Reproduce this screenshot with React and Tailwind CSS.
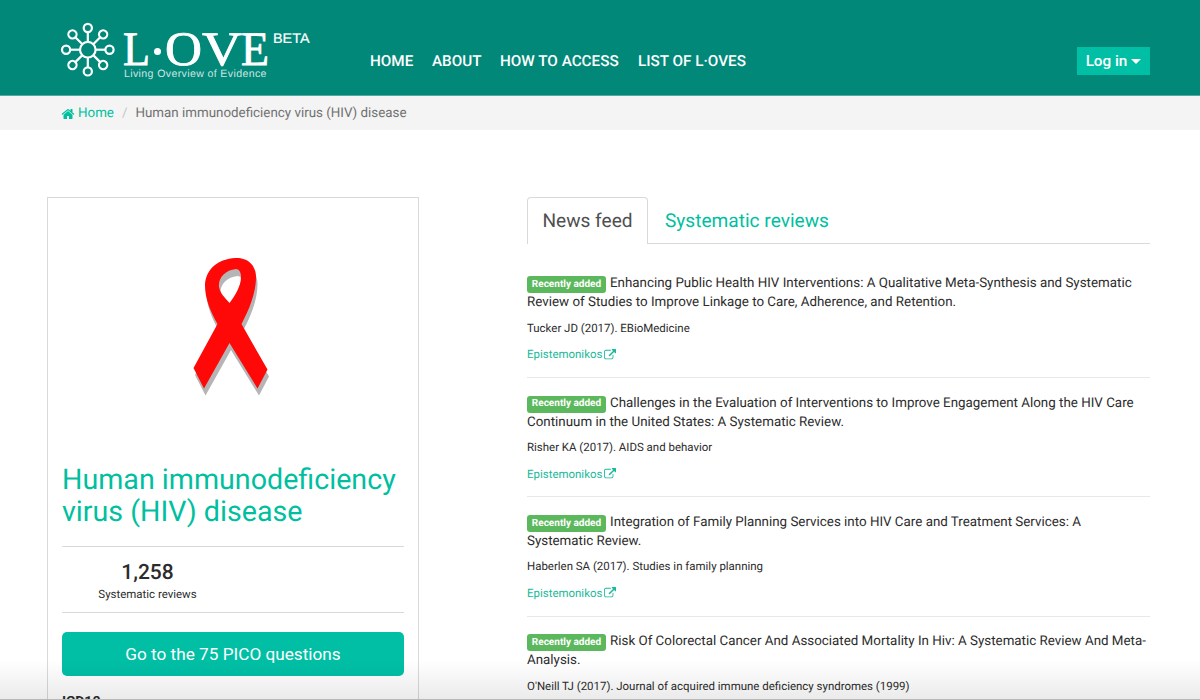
import React from 'react';

const navLinks = [
  { label: 'HOME', width: 'w-[43px]' },
  { label: 'ABOUT', width: 'w-[49px]' },
  { label: 'HOW TO ACCESS', width: 'w-[119px]' },
  { label: 'LIST OF L·OVES', width: 'w-[107px]' },
];

const articles = [
  {
    lines: [
      'Enhancing Public Health HIV Interventions: A Qualitative Meta-Synthesis and Systematic',
      'Review of Studies to Improve Linkage to Care, Adherence, and Retention.',
    ],
    source: 'Tucker JD (2017). EBioMedicine',
  },
  {
    lines: [
      'Challenges in the Evaluation of Interventions to Improve Engagement Along the HIV Care',
      'Continuum in the United States: A Systematic Review.',
    ],
    source: 'Risher KA (2017). AIDS and behavior',
  },
  {
    lines: [
      'Integration of Family Planning Services into HIV Care and Treatment Services: A',
      'Systematic Review.',
    ],
    source: 'Haberlen SA (2017). Studies in family planning',
  },
  {
    lines: [
      'Risk Of Colorectal Cancer And Associated Mortality In Hiv: A Systematic Review And Meta-',
      'Analysis.',
    ],
    source: "O'Neill TJ (2017). Journal of acquired immune deficiency syndromes (1999)",
  },
];

const HomeIcon = () => (
  <svg viewBox="0 0 1792 1792" className="h-[14px] w-[14px] shrink-0" fill="currentColor">
    <path d="M1472 992v480q0 26-19 45t-45 19h-384v-384h-256v384h-384q-26 0-45-19t-19-45v-480q0-1 .5-3t.5-3l575-474 575 474q1 2 1 6zm223-69l-62 74q-8 9-21 11h-3q-13 0-21-7l-692-577-692 577q-12 8-24 7-13-2-21-11l-62-74q-8-10-7-23.5t11-21.5l719-599q32-26 76-26t76 26l244 204v-195q0-14 9-23t23-9h192q14 0 23 9t9 23v408l219 182q10 8 11 21.5t-7 23.5z" />
  </svg>
);

const ExternalLinkIcon = () => (
  <svg viewBox="0 0 1792 1792" className="h-[12px] w-[12px] shrink-0" fill="currentColor">
    <path d="M1408 928v320q0 119-84.5 203.5t-203.5 84.5h-832q-119 0-203.5-84.5t-84.5-203.5v-832q0-119 84.5-203.5t203.5-84.5h704q14 0 23 9t9 23v64q0 14-9 23t-23 9h-704q-66 0-113 47t-47 113v832q0 66 47 113t113 47h832q66 0 113-47t47-113v-320q0-14 9-23t23-9h64q14 0 23 9t9 23zm384-864v512q0 26-19 45t-45 19-45-19l-176-176-652 652q-10 10-23 10t-23-10l-114-114q-10-10-10-23t10-23l652-652-176-176q-19-19-19-45t19-45 45-19h512q26 0 45 19t19 45z" />
  </svg>
);

const Logo = () => (
  <svg viewBox="60 20 252 62" className="h-[62px] w-[252px] shrink-0" fill="white">
    <g transform="translate(87.8 49.7)" fill="none" stroke="white" strokeWidth="2.2">
      <circle r="7.8" />
      {[0, 45, 90, 135, 180, 225, 270, 315].map((angle) => (
        <g key={angle} transform={`rotate(${angle})`}>
          <path d="M0 -8V-17.6" />
          <circle cy="-21.7" r="4.1" />
        </g>
      ))}
    </g>
    <g fontFamily="Liberation Serif, serif" fontSize="48" stroke="white" strokeWidth="0.8">
      <text x="123" y="65" textLength="27" lengthAdjust="spacingAndGlyphs">L</text>
      <text x="165" y="65" textLength="37" lengthAdjust="spacingAndGlyphs">O</text>
      <text x="202" y="65" textLength="40" lengthAdjust="spacingAndGlyphs">V</text>
      <text x="241" y="65" textLength="28" lengthAdjust="spacingAndGlyphs">E</text>
    </g>
    <circle cx="157.5" cy="51.5" r="3.5" />
    <text x="124" y="77.3" fontFamily="Liberation Sans, sans-serif" fontSize="10.6" fillOpacity="0.8" textLength="142.5">
      Living Overview of Evidence
    </text>
    <text x="273" y="43" fontFamily="Liberation Sans, sans-serif" fontSize="14" stroke="white" strokeWidth="0.2" textLength="36.5" lengthAdjust="spacingAndGlyphs">
      BETA
    </text>
  </svg>
);

// Awareness ribbon with an offset grey shadow
const Ribbon = () => {
  const shape =
    'M35 17C45 16 56 22 56 36C56 52 49 69 41.500 83L67.500 128.500L57.500 147.500L29.500 102L4 147.500L-6.500 127L17.500 83C10 69 5 58 5 44C6 27 19 18 35 17ZM36 28C25 29 18 37 19 46C20 52 25 57 29.500 62C35 55 41 45 41 36C41 31 39 28 36 28Z';
  return (
    <svg viewBox="-10 14 82 144" className="mr-[4px] h-[144px] w-[82px]" fillRule="evenodd">
      <path d={shape} fill="#b5b5b5" transform="translate(1.5 7)" />
      <path d={shape} fill="#fe0808" />
    </svg>
  );
};

const Article = ({ article }) => (
  <article className="mb-[15.250px] border-b border-[#e8e8e8] pb-[13.8px] whitespace-nowrap">
    <h3 className="text-[13.37px] leading-[19.1px] text-[#2c2c2c]">
      <span className="flex h-[19.1px] items-start">
        <span className="mt-[2px] mr-1 flex h-[17px] w-[79px] shrink-0 items-center justify-center rounded-[3px] bg-[#5cb85c] text-[10.03px] font-bold text-white">
          Recently added
        </span>
        {article.lines[0]}
      </span>
      <span className="block">{article.lines[1]}</span>
    </h3>
    <p className="mt-[7.4px] text-[11.46px] leading-[17px] text-[#2c2c2c]">{article.source}</p>
    <a href="#" className="mt-[9.6px] flex items-center gap-[2px] text-[11.46px] leading-[17px] text-[#19b99a]">
      Epistemonikos
      <ExternalLinkIcon />
    </a>
  </article>
);

export default function App() {
  return (
    <div className="relative h-[700px] w-[1200px] overflow-hidden bg-white font-['Roboto',sans-serif] text-[#2c2c2c] [text-rendering:geometricPrecision]">
      <header className="flex h-[96px] items-start border-b border-[#55a89e] bg-[#018879] pt-5 pl-[60px] text-white">
        <Logo />
        <nav className="mt-[29px] ml-[58px] flex gap-[19px] text-[15.28px] leading-6 font-medium whitespace-nowrap">
          {navLinks.map((link) => (
            <a key={link.label} href="#" className={link.width}>{link.label}</a>
          ))}
        </nav>
        <button className="mt-[27px] mr-[50px] ml-auto flex h-[28px] w-[73px] items-center justify-center gap-1 bg-[#00bfa5] text-[15.28px] font-medium">
          Log in
          <span className="border-x-5 border-t-5 border-x-transparent border-t-white" />
        </button>
      </header>

      <div className="flex h-[34px] items-center bg-[#f4f4f4] pt-[2px] pl-[61px] text-[13.37px] whitespace-nowrap">
        <a href="#" className="flex items-center gap-[3px] text-[#00bf9f]">
          <HomeIcon />
          Home
        </a>
        <span className="mx-2 text-[#c4c4c4]">/</span>
        <span className="text-[#717171]">Human immunodeficiency virus (HIV) disease</span>
      </div>

      <main className="flex items-start pt-[67px] pl-[47px]">
        <aside className="h-[560px] w-[372px] shrink-0 border border-[#d9d9d9] px-[14px]">
          <div className="flex h-[265px] justify-center pt-[57px]">
            <Ribbon />
          </div>
          <h1 className="text-[28.65px] leading-[32px] whitespace-nowrap text-[#00bf9f]">
            Human immunodeficiency
            <br />
            virus (HIV) disease
          </h1>
          <div className="mt-[19px] flex h-[67px] border-y border-[#d9d9d9] pt-[12.600px]">
            <div className="w-[171px] text-center">
              <div className="text-[21px] leading-[26px] font-medium">1,258</div>
              <div className="text-[11.46px] leading-[17px]">Systematic reviews</div>
            </div>
          </div>
          <button className="mt-[19px] flex h-[44px] w-full items-center justify-center rounded-[5px] bg-[#00bfa5] pt-px text-[17.19px] text-white">
            Go to the 75 PICO questions
          </button>
          <h2 className="mt-[16px] text-[14px] leading-5 font-bold">ICD10</h2>
        </aside>

        <section className="ml-[108px] w-[623px]">
          <div className="flex h-[47px] text-[19.1px] whitespace-nowrap">
            <a href="#" className="flex w-[121px] items-center justify-center rounded-t-[4px] border border-b-0 border-[#d9d9d9] text-[#4f4f4f]">
              News feed
            </a>
            <a href="#" className="flex grow items-center border-b border-[#d9d9d9] pt-[2px] pl-[17px] text-[#00bf9f]">
              Systematic reviews
            </a>
          </div>
          <div className="mt-[30.300px]">
            {articles.map((article) => (
              <Article key={article.source} article={article} />
            ))}
          </div>
        </section>
      </main>

      {/* Fade along the bottom edge */}
      <div className="pointer-events-none absolute inset-x-0 bottom-0 h-[40px] border-b border-[#b8b8b8] bg-gradient-to-b from-transparent to-black/8" />
    </div>
  );
}
